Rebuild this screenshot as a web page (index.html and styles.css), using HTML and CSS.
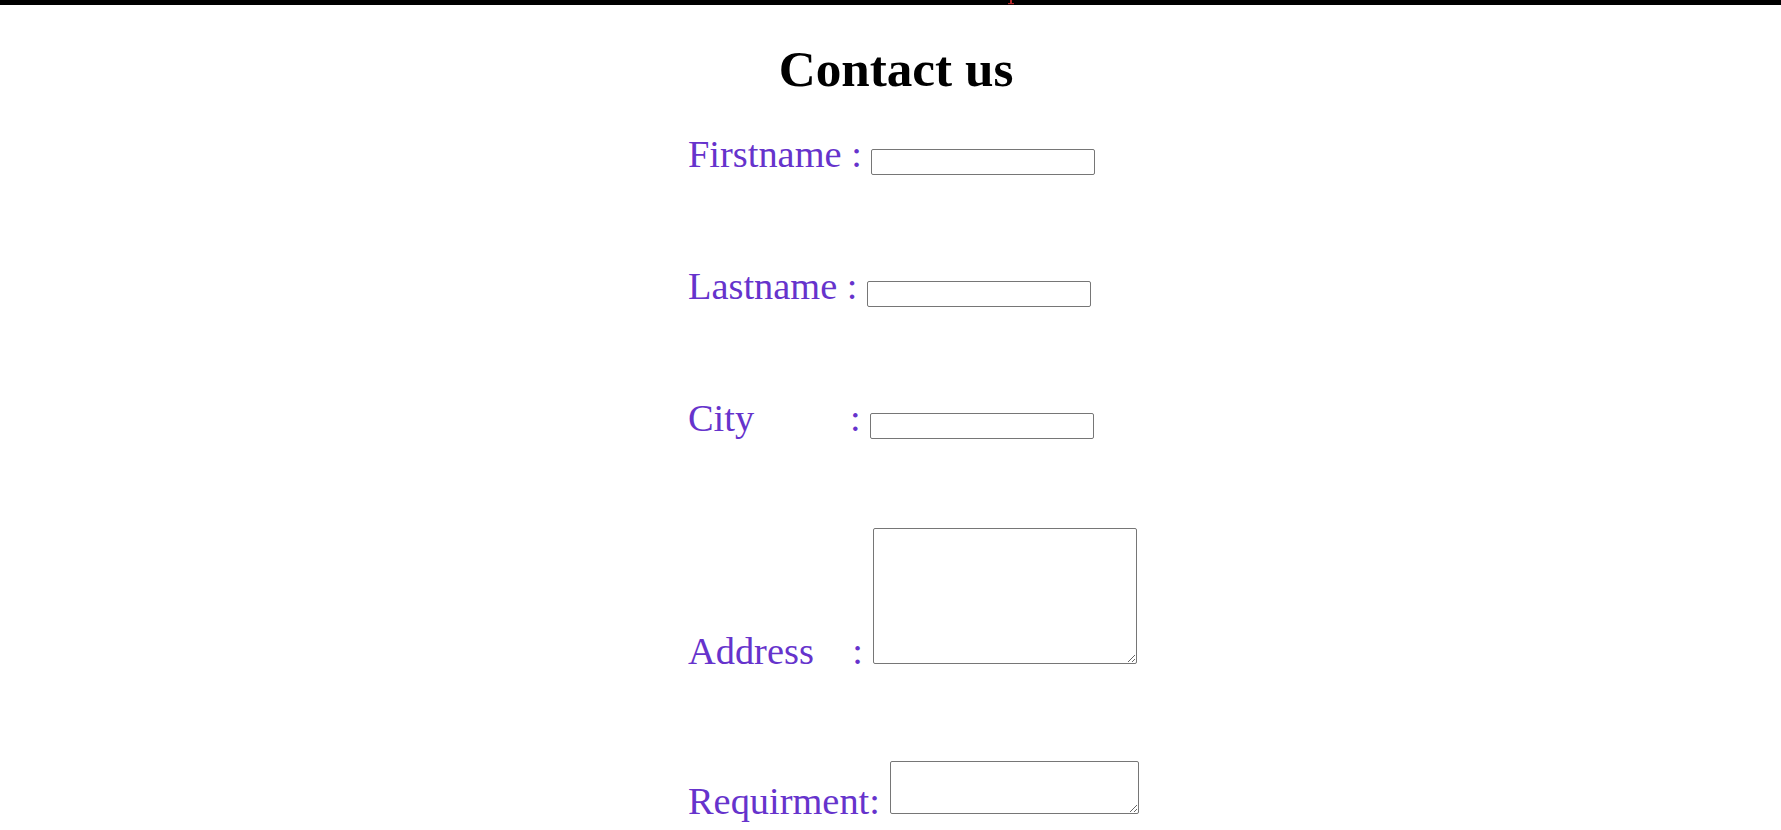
FILE: index.html
```html
<!DOCTYPE html>
<html lang="en">
<head>
<meta charset="utf-8">
<title>Contact us</title>
<link rel="stylesheet" href="styles.css">
</head>
<body>
<header class="topbar">
  <svg class="peek" width="8" height="5" viewBox="0 0 8 5" aria-hidden="true"><rect x="3" y="0" width="2" height="4" fill="#b3282b"/><rect x="1" y="3" width="6" height="1.2" fill="#b3282b"/></svg>
</header>
<main class="contact">
  <h1 class="title">Contact us</h1>
  <form class="form">
    <label class="lbl" for="fn">Firstname :</label> <input class="field" id="fn" type="text"><br><br><br>
    <label class="lbl" for="ln">Lastname :</label> <input class="field" id="ln" type="text"><br><br><br>
    <label class="lbl" for="ct">City&nbsp;&nbsp;&nbsp;&nbsp;&nbsp;&nbsp;&nbsp;&nbsp;&nbsp;&nbsp;:</label> <input class="field" id="ct" type="text"><br><br><br>
    <label class="lbl" for="ad">Address&nbsp;&nbsp;&nbsp;&nbsp;:</label> <textarea class="area area-address" id="ad"></textarea><br><br><br>
    <label class="lbl" for="rq">Requirment:</label> <textarea class="area area-req" id="rq"></textarea>
  </form>
</main>
</body>
</html>
```
FILE: styles.css
```css
html, body {
  margin: 0;
  padding: 0;
  background: #ffffff;
}

body {
  font-family: "Liberation Serif", "Times New Roman", serif;
  color: #000;
}

.topbar {
  position: relative;
  height: 5px;
  background: #000;
}

.peek {
  position: absolute;
  left: 1007px;
  top: 0;
  display: block;
}

.contact {
  margin-left: calc(50% - 202.5px);
  width: 416px;
}

.title {
  font-size: 51.2px;
  font-weight: bold;
  text-align: center;
  margin: 34px 0 34px 0;
  white-space: nowrap;
}

.form {
  font-size: 38.4px;
  color: #6633cc;
  white-space: nowrap;
}

.lbl {
  color: #6633cc;
}

.field {
  box-sizing: border-box;
  width: 224px;
  height: 26px;
  margin: 0;
  padding: 2px 2px 0 2px;
  border: 1px solid #767676;
  border-radius: 2px;
  font-family: "Liberation Sans", Arial, sans-serif;
  font-size: 13.333px;
  background: #fff;
  vertical-align: baseline;
}

.area {
  box-sizing: border-box;
  margin: 0;
  padding: 2px;
  border: 1px solid #767676;
  border-radius: 2px;
  font-family: "Liberation Mono", monospace;
  font-size: 13.333px;
  background: #fff;
  vertical-align: baseline;
}

.area-address {
  width: 264px;
  height: 136px;
}

.area-req {
  width: 249px;
  height: 53px;
}
```
